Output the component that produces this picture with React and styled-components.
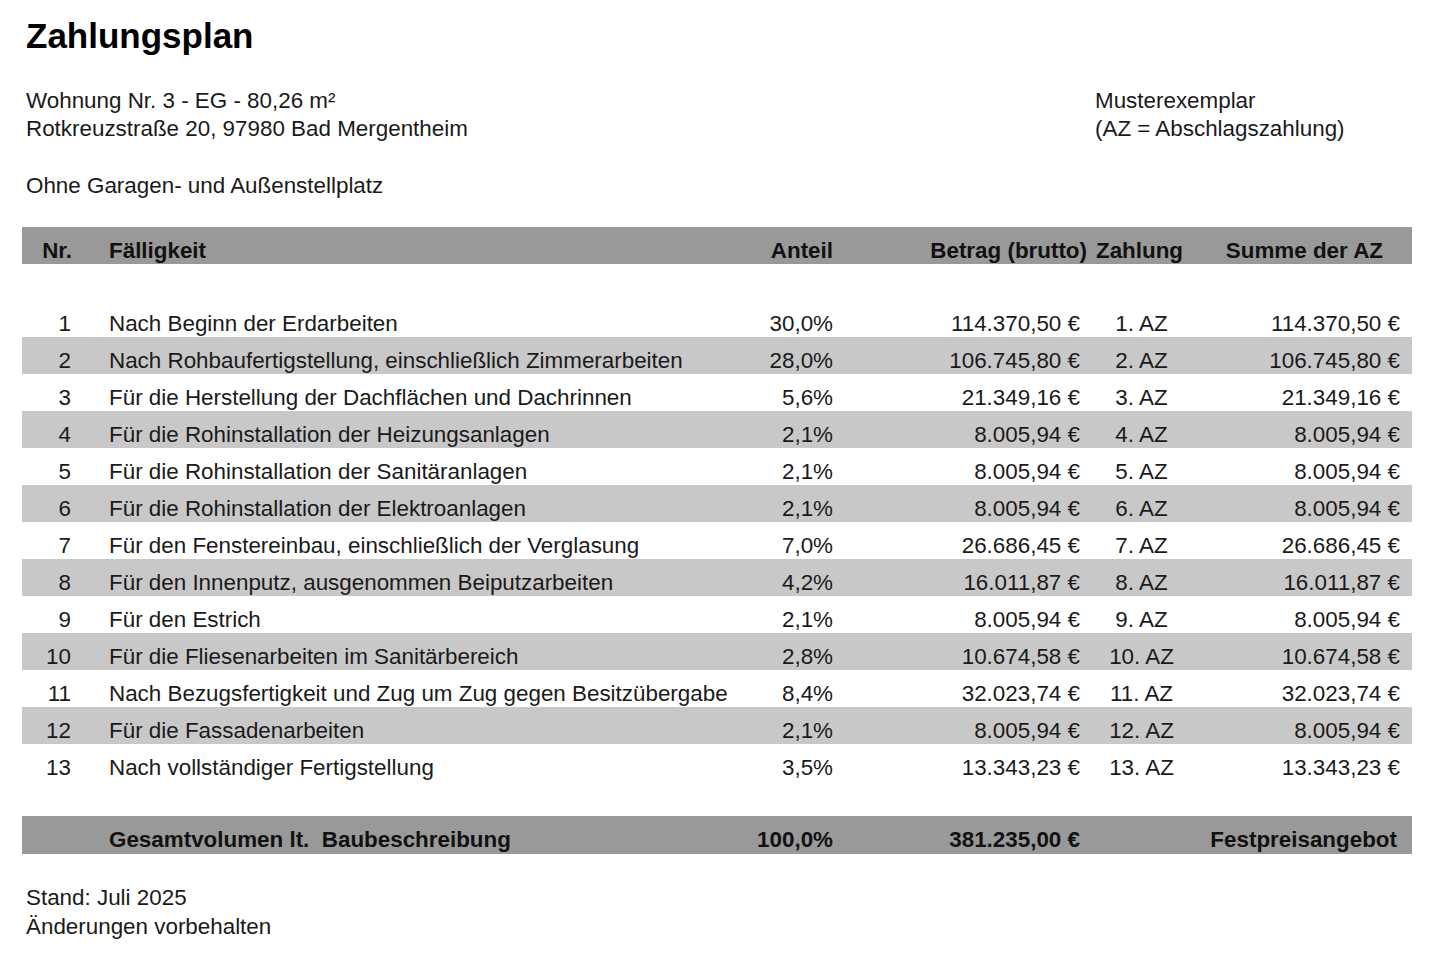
import styled, { createGlobalStyle } from "styled-components";

const GlobalStyle = createGlobalStyle`
  body {
    margin: 0;
    background: #ffffff;
    font-family: "Liberation Sans", Arial, sans-serif;
    color: #1a1a1a;
  }
`;

const rows = [
    ["1", "Nach Beginn der Erdarbeiten", "30,0%", "114.370,50 €"],
    ["2", "Nach Rohbaufertigstellung, einschließlich Zimmerarbeiten", "28,0%", "106.745,80 €"],
    ["3", "Für die Herstellung der Dachflächen und Dachrinnen", "5,6%", "21.349,16 €"],
    ["4", "Für die Rohinstallation der Heizungsanlagen", "2,1%", "8.005,94 €"],
    ["5", "Für die Rohinstallation der Sanitäranlagen", "2,1%", "8.005,94 €"],
    ["6", "Für die Rohinstallation der Elektroanlagen", "2,1%", "8.005,94 €"],
    ["7", "Für den Fenstereinbau, einschließlich der Verglasung", "7,0%", "26.686,45 €"],
    ["8", "Für den Innenputz, ausgenommen Beiputzarbeiten", "4,2%", "16.011,87 €"],
    ["9", "Für den Estrich", "2,1%", "8.005,94 €"],
    ["10", "Für die Fliesenarbeiten im Sanitärbereich", "2,8%", "10.674,58 €"],
    ["11", "Nach Bezugsfertigkeit und Zug um Zug gegen Besitzübergabe", "8,4%", "32.023,74 €"],
    ["12", "Für die Fassadenarbeiten", "2,1%", "8.005,94 €"],
    ["13", "Nach vollständiger Fertigstellung", "3,5%", "13.343,23 €"],
];

export default function App() {
    return (
        <>
            <GlobalStyle/>
            <Page>
                <Title>Zahlungsplan</Title>
                <Info>
                    <Lines>
                        <p>Wohnung Nr. 3 - EG - 80,26 m²</p>
                        <p>Rotkreuzstraße 20, 97980 Bad Mergentheim</p>
                    </Lines>
                    <Lines>
                        <p>Musterexemplar</p>
                        <p>(AZ = Abschlagszahlung)</p>
                    </Lines>
                </Info>
                <Note>Ohne Garagen- und Außenstellplatz</Note>

                <Table>
                    <Row $tone="head">
                        <Cell $align="right" $pr={14}>Nr.</Cell>
                        <Cell $pl={23}>Fälligkeit</Cell>
                        <Cell $align="right" $pr={7}>Anteil</Cell>
                        <Cell $align="right" $pr={1}>Betrag (brutto)</Cell>
                        <Cell $align="center" $pr={4}>Zahlung</Cell>
                        <Cell $align="right" $pr={29}>Summe der AZ</Cell>
                    </Row>
                    <Spacer $h={36}/>
                    {rows.map(([nr, text, share, amount], i) => (
                        <Row key={nr} $tone={i % 2 === 1 ? "stripe" : "plain"}>
                            <Cell $align="right" $pr={15}>{nr}</Cell>
                            <Cell $pl={23}>{text}</Cell>
                            <Cell $align="right" $pr={7}>{share}</Cell>
                            <Cell $align="right" $pr={8}>{amount}</Cell>
                            <Cell $align="center">{nr}. AZ</Cell>
                            <Cell $align="right" $pr={12}>{amount}</Cell>
                        </Row>
                    ))}
                    <Spacer $h={35}/>
                    <Row $tone="total">
                        <Cell/>
                        <Cell $pl={23}>Gesamtvolumen lt.&nbsp; Baubeschreibung</Cell>
                        <Cell $align="right" $pr={7}>100,0%</Cell>
                        <Cell $align="right" $pr={8}>381.235,00 €</Cell>
                        <Cell $align="right" $pr={15} $span={2}>Festpreisangebot</Cell>
                    </Row>
                </Table>

                <Footer>
                    <p>Stand: Juli 2025</p>
                    <p>Änderungen vorbehalten</p>
                </Footer>
            </Page>
        </>
    );
}

const tones = {
    head: "#999999",
    total: "#999999",
    stripe: "#c8c8c8",
    plain: "transparent",
};

const Page = styled.div`
  width: 1390px;
  padding: 16px 0 0 22px;
`;

const Title = styled.h1`
  margin: 0 0 0 4px;
  font-size: 35px;
  line-height: 40px;
  font-weight: 700;
  color: #000;
`;

const Info = styled.div`
  display: grid;
  grid-template-columns: 1069px 1fr;
  margin-top: 31px;
  padding-left: 4px;
`;

const Lines = styled.div`
  p {
    margin: 0;
    font-size: 22.4px;
    line-height: 28px;
  }
`;

const Note = styled.p`
  margin: 29px 0 0 4px;
  font-size: 22.4px;
  line-height: 28px;
`;

const Table = styled.div`
  margin-top: 27px;
  display: flex;
  flex-direction: column;
`;

const Row = styled.div`
  display: grid;
  grid-template-columns: 64px 654px 100px 248px 107px 217px;
  height: ${p => (p.$tone === "total" ? 38 : 37)}px;
  background: ${p => tones[p.$tone]};
  font-size: 22.4px;
  font-weight: ${p => (p.$tone === "head" || p.$tone === "total" ? 700 : 400)};
  color: ${p => (p.$tone === "head" || p.$tone === "total" ? "#111" : "#1a1a1a")};
`;

const Spacer = styled.div`
  height: ${p => p.$h}px;
`;

const Cell = styled.div`
  display: flex;
  align-items: center;
  justify-content: ${p => (p.$align === "right" ? "flex-end" : p.$align === "center" ? "center" : "flex-start")};
  grid-column: span ${p => p.$span || 1};
  padding: 10px ${p => p.$pr || 0}px 0 ${p => p.$pl || 0}px;
  white-space: nowrap;
`;

const Footer = styled.div`
  margin-top: 29px;
  padding-left: 4px;
  p {
    margin: 0;
    font-size: 22.4px;
    line-height: 29px;
  }
`;
